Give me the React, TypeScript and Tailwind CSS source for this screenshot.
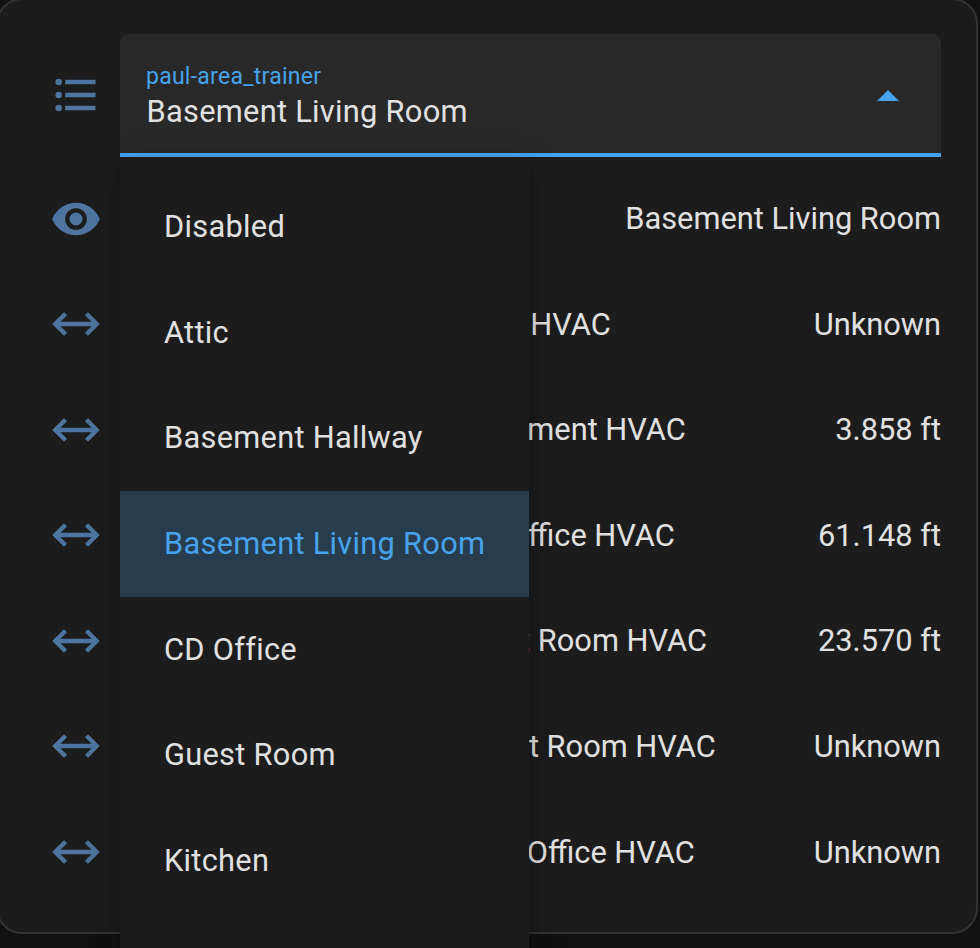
const ICONS = {
  list: "M7,5H21V7H7V5M7,13V11H21V13H7M4,4.5A1.5,1.5 0 0,1 5.5,6A1.5,1.5 0 0,1 4,7.5A1.5,1.5 0 0,1 2.5,6A1.5,1.5 0 0,1 4,4.5M4,10.5A1.5,1.5 0 0,1 5.5,12A1.5,1.5 0 0,1 4,13.5A1.5,1.5 0 0,1 2.5,12A1.5,1.5 0 0,1 4,10.5M7,19V17H21V19H7M4,16.5A1.5,1.5 0 0,1 5.5,18A1.5,1.5 0 0,1 4,19.5A1.5,1.5 0 0,1 2.5,18A1.5,1.5 0 0,1 4,16.5Z",
  eye: "M12,9A3,3 0 0,0 9,12A3,3 0 0,0 12,15A3,3 0 0,0 15,12A3,3 0 0,0 12,9M12,17A5,5 0 0,1 7,12A5,5 0 0,1 12,7A5,5 0 0,1 17,12A5,5 0 0,1 12,17M12,4.5C7,4.5 2.73,7.61 1,12C2.73,16.39 7,19.5 12,19.5C17,19.5 21.27,16.39 23,12C21.27,7.61 17,4.5 12,4.5Z",
  distance:
    "M6.45,17.45L1,12L6.45,6.55L7.86,7.96L4.83,11H19.17L16.14,7.96L17.55,6.55L23,12L17.55,17.45L16.14,16.04L19.17,13H4.83L7.86,16.04L6.45,17.45Z",
};

function Icon({ name }: { name: keyof typeof ICONS }) {
  return (
    <svg
      viewBox="0 0 24 24"
      className={`mr-[0.8px] size-[52px] shrink-0 fill-[#4d759f] ${name === "eye" ? "" : "mb-[1.4px]"}`}
    >
      <path d={ICONS[name]} />
    </svg>
  );
}

const ROWS: { icon: keyof typeof ICONS; name: string; width: string; value: string }[] = [
  { icon: "eye", name: "", width: "w-0", value: "Basement Living Room" },
  { icon: "distance", name: "Attic HVAC", width: "w-[508.8px]", value: "Unknown" },
  { icon: "distance", name: "Basement HVAC", width: "w-[583.8px]", value: "3.858 ft" },
  { icon: "distance", name: "CD Office HVAC", width: "w-[572.8px]", value: "61.148 ft" },
  { icon: "distance", name: "Guest Room HVAC", width: "w-[605px]", value: "23.570 ft" },
  { icon: "distance", name: "Guest Room HVAC", width: "w-[613.8px]", value: "Unknown" },
  { icon: "distance", name: "PM Office HVAC", width: "w-[592.8px]", value: "Unknown" },
];

const OPTIONS = ["Disabled", "Attic", "Basement Hallway", "Basement Living Room", "CD Office", "Guest Room", "Kitchen"];
const SELECTED = "Basement Living Room";

function Menu() {
  return (
    <ul className="absolute top-[123px] left-0 h-[900px] w-[409px] bg-[#1c1c1c] pt-[17.6px] shadow-[0_11px_11px_-6px_rgba(0,0,0,0.2),0_18px_22px_2px_rgba(0,0,0,0.14),0_7px_31px_4px_rgba(0,0,0,0.12)]">
      {OPTIONS.map((option) => (
        <li
          key={option}
          className={`flex h-[105.6px] items-center pl-[44px] tracking-[0.28px] ${option === SELECTED ? "bg-[#273c4c] text-[#47a3ec]" : ""}`}
        >
          {option}
        </li>
      ))}
    </ul>
  );
}

function Select() {
  return (
    <div className="relative z-10 h-[123px] w-[821px]">
      <div className="flex h-full items-center justify-between rounded-t-[9px] border-b-4 border-[#47a3ec] bg-[#282828] pr-[42px] pl-[26px]">
        <div className="flex flex-col pt-[2px]">
          <span className="text-[23px] leading-[34px] tracking-[0.26px] text-[#47a3ec]">paul-area_trainer</span>
          <span className="pl-[0.5px] leading-[36px] tracking-[0.28px]">{SELECTED}</span>
        </div>
        <svg viewBox="0 0 22 11" className="mt-[4px] h-[11px] w-[22px] fill-[#47a3ec]">
          <path d="M0 11 11 0 22 11Z" />
        </svg>
      </div>
      <Menu />
    </div>
  );
}

export default function App() {
  return (
    <div className="h-[948px] w-[980px] overflow-hidden bg-[#111111] font-['Roboto',sans-serif] text-[30.8px] text-[#e1e1e1]">
      <div className="-mt-[2px] -ml-[4px] h-[936px] w-[982px] rounded-[26px] border-2 border-[#333333] bg-[#1c1c1c] pt-[34px] pl-[51.6px]">
        <div className="flex items-center gap-[17.6px]">
          <Icon name="list" />
          <Select />
        </div>
        <div className="mt-[9.4px]">
          {ROWS.map((row, i) => (
            <div key={i} className="flex h-[105.6px] w-[891.4px] items-center">
              <Icon name={row.icon} />
              <span className={`-ml-[0.4px] flex shrink-0 justify-end whitespace-nowrap ${row.width}`}>{row.name}</span>
              <span className="flex-1 text-right whitespace-nowrap">{row.value}</span>
            </div>
          ))}
        </div>
      </div>
    </div>
  );
}
